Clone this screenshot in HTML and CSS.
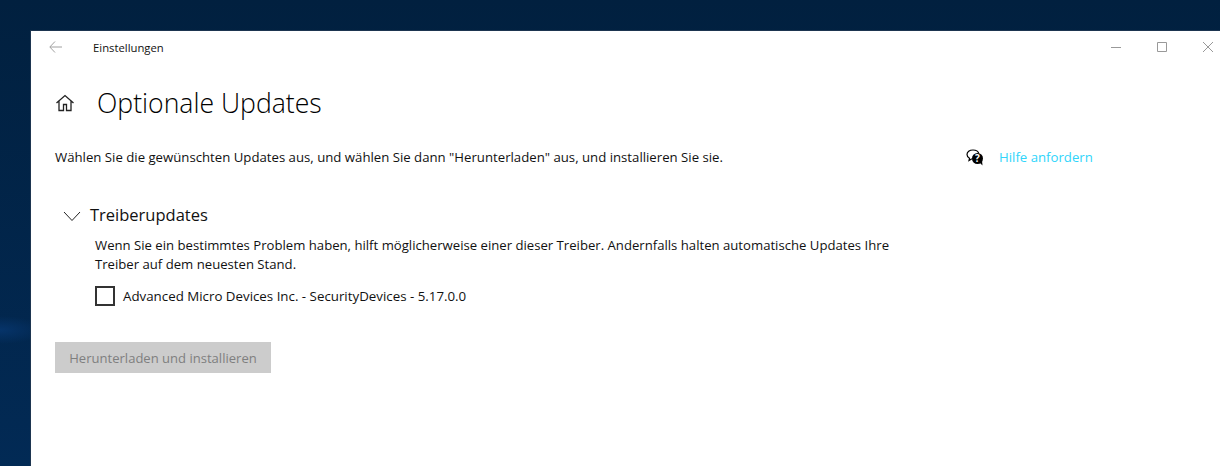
FILE: index.html
```html
<!DOCTYPE html>
<html lang="de">
<head>
    <meta charset="UTF-8">
    <title>Einstellungen</title>
    <link rel="stylesheet" href="styles.css">
</head>
<body>
    <div class="window">
        <!-- Title bar -->
        <div class="titlebar">
            <svg class="back-icon" width="13" height="12" viewBox="0 0 13 12"><path d="M6 .5 .8 6 6 11.500M1 6h12" fill="none" stroke="#a0a0a0"/></svg>
            <span class="app-name">Einstellungen</span>
            <div class="window-buttons">
                <svg width="12" height="12" viewBox="0 0 12 12"><path d="M1 6.500h10" stroke="#999" fill="none"/></svg>
                <svg width="12" height="12" viewBox="0 0 12 12"><path d="M1.500 1.500h9v9h-9z" stroke="#999" fill="none"/></svg>
                <svg width="12" height="12" viewBox="0 0 12 12"><path d="M1 1l10 10M11 1 1 11" stroke="#999" fill="none"/></svg>
            </div>
        </div>

        <div class="content">
            <div class="page-title">
                <svg class="home-icon" width="20" height="20" viewBox="0 0 20 20"><path d="M1.500 10 10 2.500 18.500 10M4 8v9.500h4.500v-6h3v6H16V8" fill="none" stroke="#222" stroke-width="1.300"/></svg>
                <h1>Optionale Updates</h1>
            </div>

            <div class="intro">
                <p>Wählen Sie die gewünschten Updates aus, und wählen Sie dann "Herunterladen" aus, und installieren Sie sie.</p>
                <div class="help">
                    <svg width="18" height="17" viewBox="0 0 18 17">
                        <path d="M7 1C3.500 1 1 3 1 5.500c0 1.700 1 3 2.500 3.800L3 11.500l3-1.700" fill="#fff" stroke="#000" stroke-width="1.200"/>
                        <path d="M7 1c3 0 5.300 1.500 5.800 3.500" fill="none" stroke="#000" stroke-width="1.200"/>
                        <circle cx="11.500" cy="9.500" r="5.500" fill="#000"/>
                        <path d="M13.500 13.500l3 3-.5-5z" fill="#000"/>
                        <text class="help-mark" x="11.500" y="13" text-anchor="middle">?</text>
                    </svg>
                    <a href="#">Hilfe anfordern</a>
                </div>
            </div>

            <!-- Driver updates -->
            <div class="section-head">
                <svg width="18" height="11" viewBox="0 0 18 11"><path d="M1 1 9 9.500 17 1" fill="none" stroke="#222"/></svg>
                <h2>Treiberupdates</h2>
            </div>
            <div class="section-body">
                <p>Wenn Sie ein bestimmtes Problem haben, hilft möglicherweise einer dieser Treiber. Andernfalls halten automatische Updates Ihre<br>Treiber auf dem neuesten Stand.</p>
                <label class="driver">
                    <span class="checkbox"></span>
                    <span class="driver-name">Advanced Micro Devices Inc. - SecurityDevices - 5.17.0.0</span>
                </label>
            </div>

            <button class="install" disabled>Herunterladen und installieren</button>
        </div>
    </div>
</body>
</html>
```

FILE: styles.css
```css
html, body {
    height: 100%;
}
body {
    margin: 0;
    padding: 30px 0 0 30px;
    box-sizing: border-box;
    overflow: hidden;
    font-family: "Open Sans", "Noto Sans", sans-serif;
    font-size: 13.200px;
    color: #111;
    background: radial-gradient(ellipse 45px 14px at 0 330px, #06346a, transparent), linear-gradient(#01203f, #022a55);
}
p, h1, h2 {
    margin: 0;
    font-weight: normal;
}
.window {
    height: 100%;
    background: white;
    border-top: 1px solid #1d3550;
    border-left: 1px solid #1d3550;
}
.titlebar {
    display: flex;
    align-items: center;
    height: 32px;
    padding-left: 18px;
}
.back-icon {
    margin-right: 31px;
}
.app-name {
    font-size: 11.300px;
}
.window-buttons {
    display: flex;
    gap: 34px;
    margin-left: auto;
    margin-right: 6px;
}
.content {
    padding: 0 0 0 24px;
}
.page-title {
    display: flex;
    align-items: center;
    height: 50px;
    margin-top: 15px;
}
.home-icon {
    margin-right: 22px;
}
h1 {
    font-size: 26.600px;
    font-weight: 300;
    color: #000;
}
.intro {
    display: flex;
    align-items: center;
    margin-top: 20px;
}
.intro p {
    width: 911px;
}
.help {
    display: flex;
    align-items: center;
    gap: 15px;
}
.help a {
    color: #2fd5fb;
    text-decoration: none;
}
.help-mark {
    font-size: 10px;
    font-weight: bold;
    fill: white;
}
.section-head {
    display: flex;
    align-items: center;
    gap: 9px;
    margin: 37px 0 0 8px;
}
.section-head svg {
    margin-top: 4px;
}
.section-head h2 {
    font-size: 16.500px;
}
.section-body {
    margin: 10px 0 0 40px;
    font-size: 13.150px;
    line-height: 19px;
}
.driver {
    display: flex;
    align-items: center;
    gap: 8px;
    margin-top: 12px;
}
.driver-name {
    font-size: 13.320px;
}
.checkbox {
    width: 16px;
    height: 16px;
    border: 2px solid #333;
}
.install {
    display: block;
    width: 216px;
    height: 31px;
    margin-top: 36px;
    padding: 0;
    border: none;
    background: #cccccc;
    color: #7f7f7f;
    font: inherit;
    font-size: 13.050px;
}
```
